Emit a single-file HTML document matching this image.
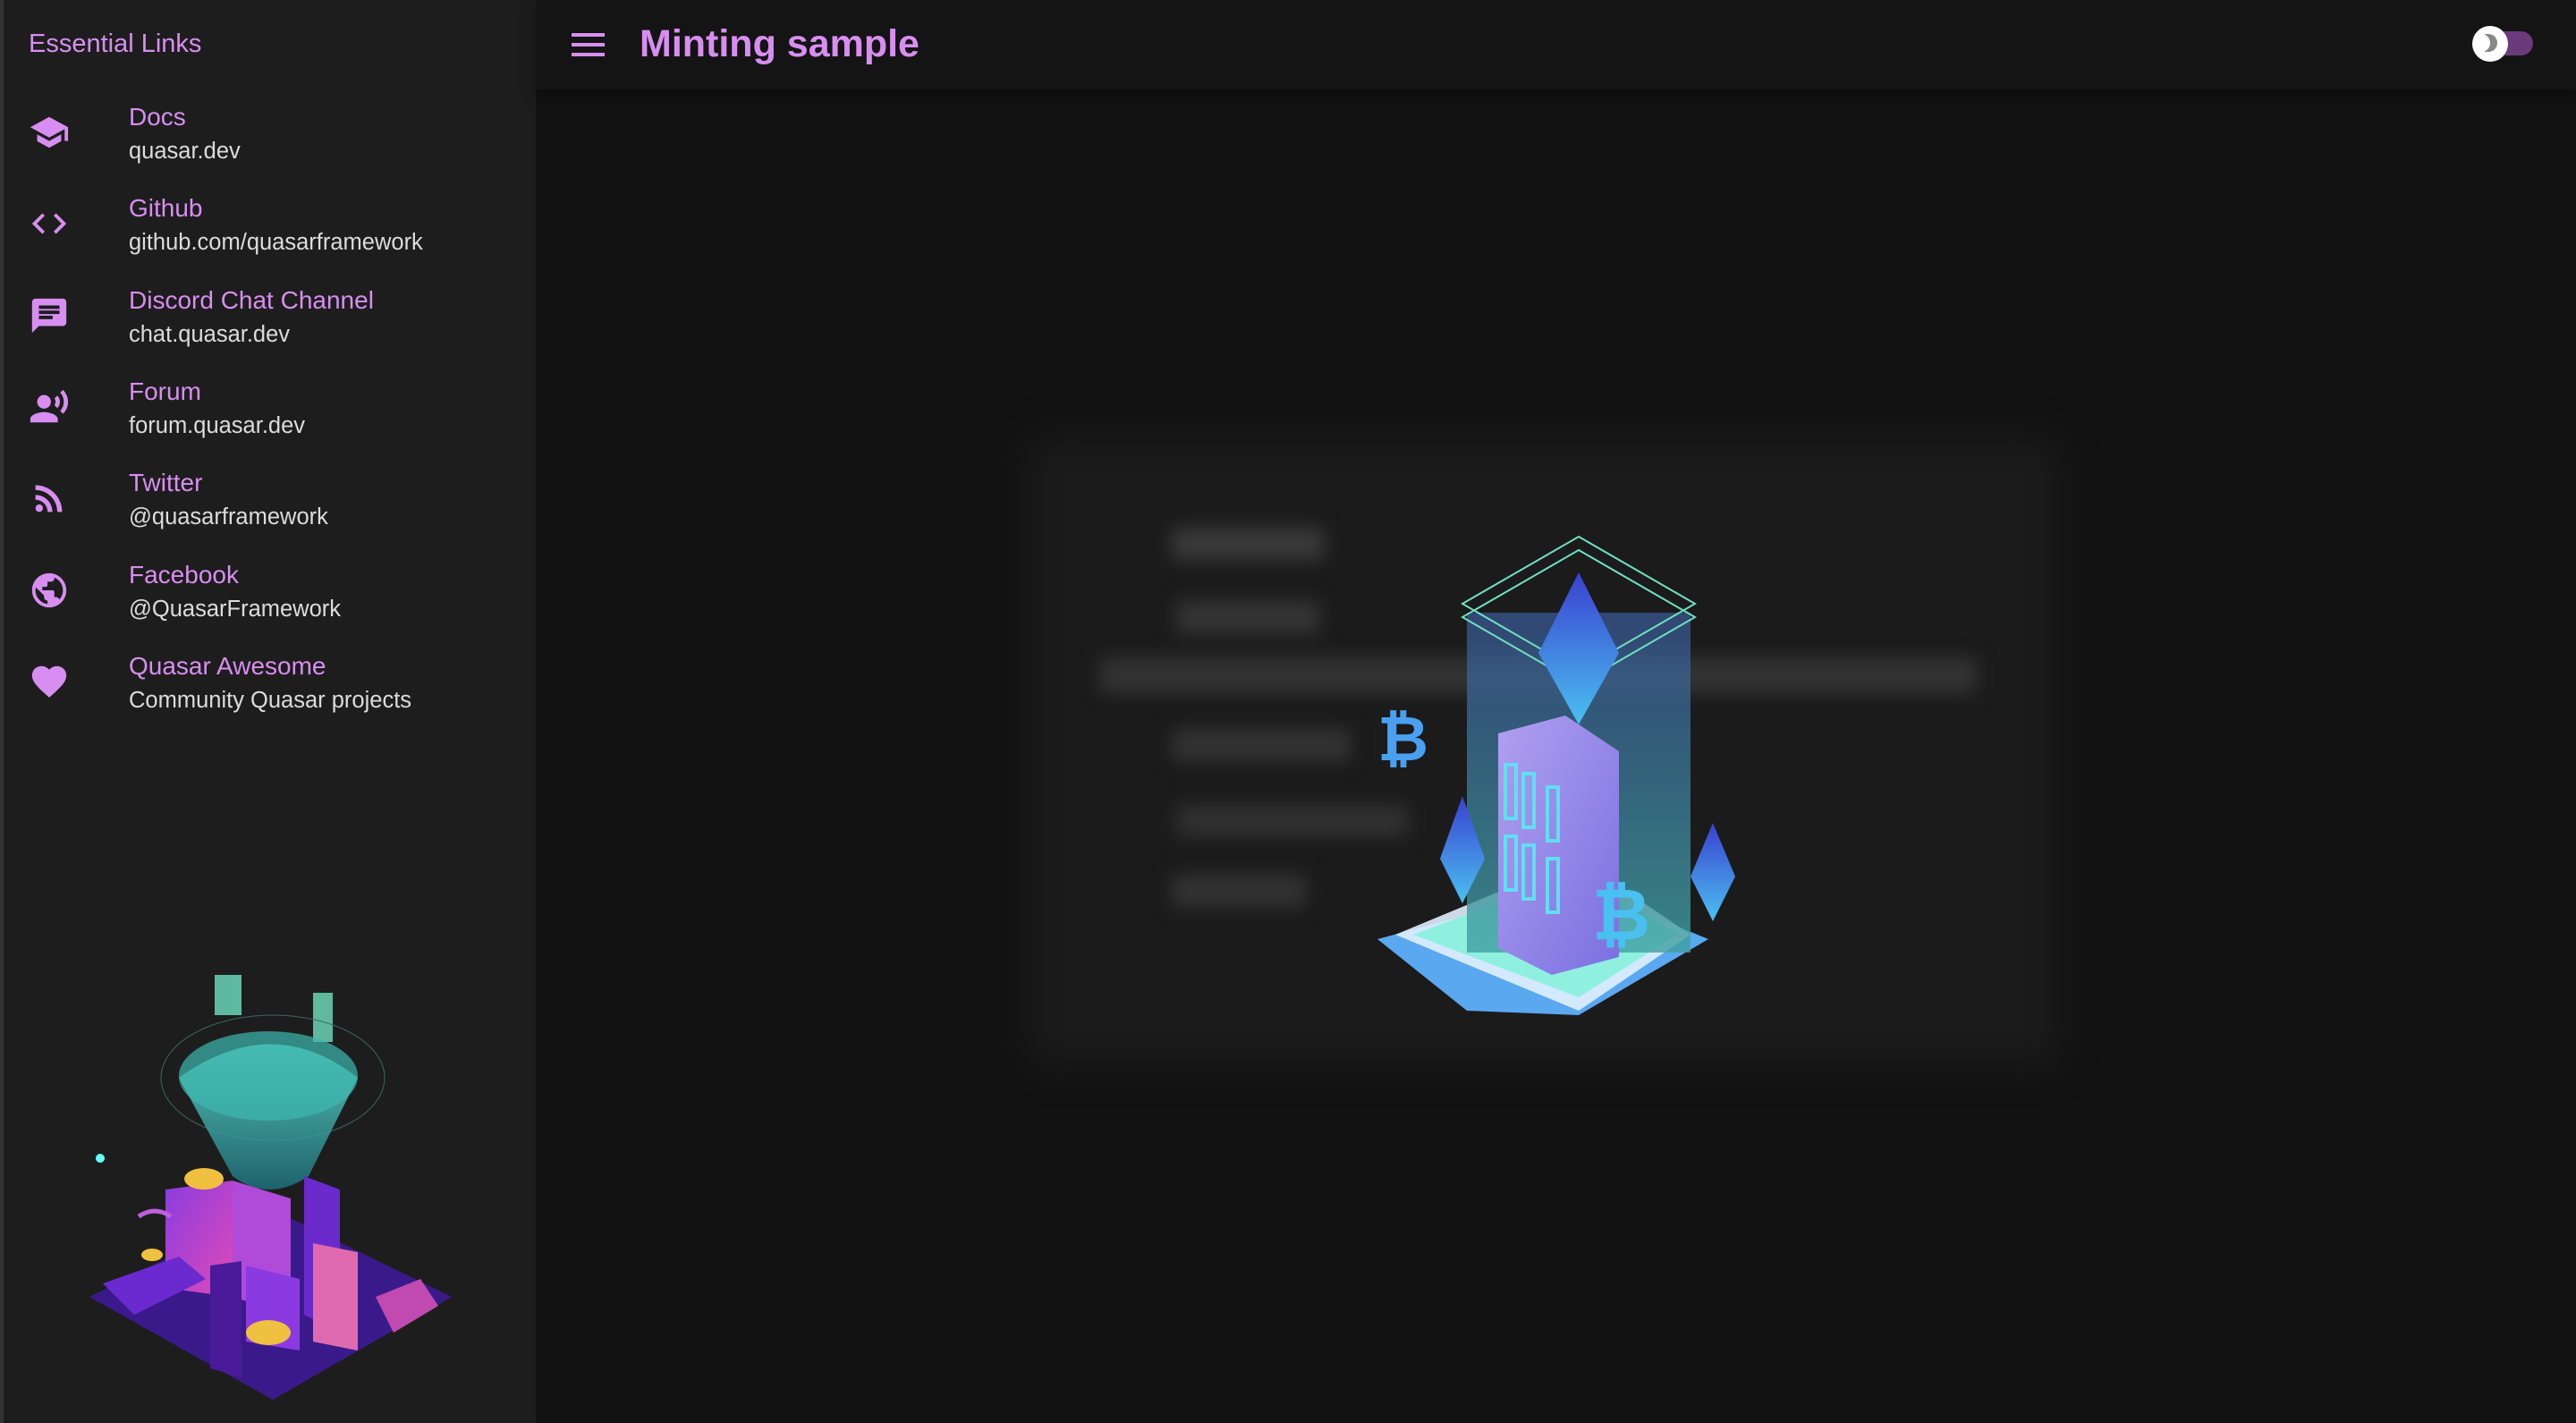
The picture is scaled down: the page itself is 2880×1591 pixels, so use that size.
<!DOCTYPE html>
<html><head><meta charset="utf-8"><style>
*{margin:0;padding:0;box-sizing:border-box}
body{width:2880px;height:1591px;background:#121212;font-family:"Liberation Sans",sans-serif;overflow:hidden;position:relative}
.side{position:absolute;left:0;top:0;width:599px;height:1591px;background:#1d1d1d;border-left:4px solid #333}
.hdr{position:absolute;left:599px;top:0;right:0;height:100px;background:#141414;box-shadow:0 6px 16px rgba(0,0,0,.35)}
.t{position:absolute;white-space:nowrap}
.lab{color:#d88ef0;font-size:28px;left:144px}
.cap{color:#dcdcdc;font-size:25.5px;left:144px}
.ic{position:absolute;left:32px;width:46px;height:46px}
</style></head><body>
<div class="side">
<div class="t" style="left:28px;top:33px;color:#d88ef0;font-size:29px">Essential Links</div>
</div>
<div class="hdr"></div>
<div style="position:absolute;left:639px;top:37px;width:37px;height:4px;background:#d88ef0;box-shadow:0 11px 0 #d88ef0,0 22px 0 #d88ef0"></div>
<div class="t" style="left:715px;top:25px;color:#d88ef0;font-size:43px;font-weight:bold">Minting sample</div>
<div style="position:absolute;left:2770px;top:35px;width:62px;height:27px;border-radius:14px;background:#6a3a7c"></div>
<div style="position:absolute;left:2764px;top:29px;width:40px;height:40px;border-radius:50%;background:#fff"></div>
<div style="position:absolute;left:2778px;top:38px;width:14px;height:20px;border-radius:0 10px 10px 0;background:#888"></div>
<div style="position:absolute;left:2772px;top:38px;width:12px;height:20px;border-radius:0 10px 10px 0;background:#fff"></div>

<div class="t lab" style="top:115px">Docs</div><div class="t cap" style="top:155px">quasar.dev</div>
<div class="t lab" style="top:217px">Github</div><div class="t cap" style="top:257px">github.com/quasarframework</div>
<div class="t lab" style="top:320px">Discord Chat Channel</div><div class="t cap" style="top:360px">chat.quasar.dev</div>
<div class="t lab" style="top:422px">Forum</div><div class="t cap" style="top:462px">forum.quasar.dev</div>
<div class="t lab" style="top:524px">Twitter</div><div class="t cap" style="top:564px">@quasarframework</div>
<div class="t lab" style="top:627px">Facebook</div><div class="t cap" style="top:667px">@QuasarFramework</div>
<div class="t lab" style="top:729px">Quasar Awesome</div><div class="t cap" style="top:769px">Community Quasar projects</div>

<svg class="ic" style="top:125px" viewBox="0 0 24 24" fill="#d88ef0"><path d="M5 13.18v4L12 21l7-3.82v-4L12 17l-7-3.82zM12 3L1 9l11 6 9-4.91V17h2V9L12 3z"/></svg>
<svg class="ic" style="top:227px" viewBox="0 0 24 24" fill="#d88ef0"><path d="M9.4 16.6L4.8 12l4.6-4.6L8 6l-6 6 6 6 1.4-1.4zm5.2 0l4.6-4.6-4.6-4.6L16 6l6 6-6 6-1.4-1.4z"/></svg>
<svg class="ic" style="top:330px" viewBox="0 0 24 24" fill="#d88ef0"><path d="M20 2H4c-1.1 0-2 .9-2 2v18l4-4h14c1.1 0 2-.9 2-2V4c0-1.1-.9-2-2-2zM6 9h12v2H6V9zm8 5H6v-2h8v2zm4-6H6V6h12v2z"/></svg>
<svg class="ic" style="top:432px" viewBox="0 0 24 24" fill="#d88ef0"><circle cx="9" cy="9" r="4"/><path d="M9 15c-2.67 0-8 1.34-8 4v2h16v-2c0-2.66-5.330-4-8-4zm7.76-9.64l-1.68 1.690c.84 1.18.84 2.71 0 3.89l1.68 1.69c2.02-2.02 2.020-5.07 0-7.27zM20.07 2l-1.63 1.63c2.77 3.02 2.77 7.56 0 10.74L20.07 16c3.9-3.890 3.91-9.95 0-14z"/></svg>
<svg class="ic" style="top:534px" viewBox="0 0 24 24" fill="#d88ef0"><circle cx="6.18" cy="17.82" r="2.18"/><path d="M4 4.44v2.83c7.03 0 12.73 5.7 12.73 12.73h2.83c0-8.59-6.97-15.56-15.56-15.56zm0 5.66v2.83c3.9 0 7.07 3.17 7.07 7.07h2.83c0-5.47-4.43-9.9-9.9-9.9z"/></svg>
<svg class="ic" style="top:637px" viewBox="0 0 24 24" fill="#d88ef0"><path d="M12 2C6.48 2 2 6.48 2 12s4.48 10 10 10 10-4.48 10-10S17.52 2 12 2zm-1 17.93c-3.95-.49-7-3.85-7-7.93 0-.62.08-1.21.21-1.79L9 15v1c0 1.1.9 2 2 2v1.930zm6.9-2.54c-.26-.81-1-1.39-1.9-1.39h-1v-3c0-.55-.45-1-1-1H8v-2h2c.55 0 1-.45 1-1V7h2c1.1 0 2-.9 2-2v-.41c2.93 1.19 5 4.06 5 7.41 0 2.08-.8 3.97-2.1 5.39z"/></svg>
<svg class="ic" style="top:739px" viewBox="0 0 24 24" fill="#d88ef0"><path d="M12 21.35l-1.45-1.32C5.4 15.36 2 12.28 2 8.5 2 5.42 4.42 3 7.5 3c1.74 0 3.41.81 4.5 2.09C13.09 3.81 14.76 3 16.5 3 19.58 3 22 5.42 22 8.5c0 3.78-3.4 6.86-8.55 11.54L12 21.35z"/></svg>

<svg style="position:absolute;left:60px;top:1070px" width="480" height="520" viewBox="0 0 480 520">
<defs>
<linearGradient id="fn" x1="0" y1="0" x2="0" y2="1"><stop offset="0" stop-color="#5fe0d0"/><stop offset="1" stop-color="#1e6f7a"/></linearGradient>
<linearGradient id="bd" x1="0" y1="0" x2="1" y2="1"><stop offset="0" stop-color="#8a3ce0"/><stop offset="1" stop-color="#e04ab8"/></linearGradient>
</defs>
<g fill="#6fe0c0" opacity=".8"><rect x="180" y="20" width="30" height="45"/><rect x="290" y="40" width="22" height="55"/></g>
<ellipse cx="245" cy="135" rx="125" ry="70" fill="none" stroke="#3a6a60" stroke-width="1"/>
<path d="M140 135 Q245 60 340 135 L285 245 Q240 275 200 245 Z" fill="url(#fn)" opacity=".85"/>
<ellipse cx="240" cy="133" rx="100" ry="50" fill="#3db8b0" opacity=".7"/>
<path d="M40 380 L240 280 L445 380 L245 495 Z" fill="#3a1a8a"/>
<path d="M125 260 L200 250 L200 380 L125 370 Z" fill="url(#bd)"/>
<path d="M200 250 L265 270 L265 400 L200 380 Z" fill="#b04ad8"/>
<path d="M280 245 L320 260 L320 420 L280 400 Z" fill="#6a2acc"/>
<path d="M290 320 L340 330 L340 440 L290 430 Z" fill="#e06ab0"/>
<path d="M175 345 L210 340 L210 470 L175 460 Z" fill="#4a1a9a"/>
<path d="M215 345 L275 360 L275 440 L215 430 Z" fill="#8a3ae0"/>
<path d="M55 365 L140 335 L170 360 L90 400 Z" fill="#6a2ad0"/>
<path d="M360 380 L410 360 L430 390 L380 420 Z" fill="#c04ab0"/>
<ellipse cx="168" cy="248" rx="22" ry="12" fill="#f0c040"/>
<ellipse cx="240" cy="420" rx="25" ry="14" fill="#f0c040"/>
<ellipse cx="110" cy="333" rx="12" ry="7" fill="#f0c040"/>
<path d="M95 290 q18 -12 36 0" stroke="#c060e0" stroke-width="5" fill="none"/>
<circle cx="52" cy="225" r="5" fill="#6ff"/>
</svg>

<div style="position:absolute;left:1150px;top:490px;width:1150px;height:700px;background:#1b1b1b;filter:blur(20px);border-radius:10px"></div>
<div style="filter:blur(10px)">
<div style="position:absolute;left:1310px;top:590px;width:170px;height:36px;background:#3a3a3a"></div>
<div style="position:absolute;left:1315px;top:672px;width:160px;height:36px;background:#353535"></div>
<div style="position:absolute;left:1230px;top:735px;width:980px;height:40px;background:#333"></div>
<div style="position:absolute;left:1310px;top:815px;width:200px;height:36px;background:#333"></div>
<div style="position:absolute;left:1315px;top:900px;width:260px;height:36px;background:#303030"></div>
<div style="position:absolute;left:1310px;top:978px;width:150px;height:36px;background:#333"></div>
</div>

<svg style="position:absolute;left:1520px;top:590px" width="440" height="560" viewBox="0 0 440 560">
<defs>
<linearGradient id="col" x1="0" y1="0" x2="0" y2="1"><stop offset="0" stop-color="#3a5a9a" stop-opacity=".7"/><stop offset="1" stop-color="#3fa0a0" stop-opacity=".8"/></linearGradient>
<linearGradient id="eth" x1="0" y1="0" x2="0" y2="1"><stop offset="0" stop-color="#3a40d0"/><stop offset="1" stop-color="#4ac0f0"/></linearGradient>
<linearGradient id="srv" x1="0" y1="0" x2="1" y2="1"><stop offset="0" stop-color="#b0a0f0"/><stop offset="1" stop-color="#7a70e0"/></linearGradient>
</defs>
<path d="M120 540 L20 460 L245 400 L390 460 L245 545 Z" fill="#5aa8f0"/>
<path d="M245 540 L40 455 L245 370 L370 455 Z" fill="#e0f0ff" opacity=".9"/>
<path d="M245 525 L60 455 L245 385 L355 455 Z" fill="#8ff0e0"/>
<rect x="120" y="95" width="250" height="380" fill="url(#col)"/>
<path d="M245 10 L375 85 L245 160 L115 85 Z" fill="none" stroke="#6fe0c0" stroke-width="2"/>
<path d="M245 25 L375 100 L245 175 L115 100 Z" fill="none" stroke="#6fe0c0" stroke-width="2"/>
<path d="M245 50 L290 140 L245 220 L200 140 Z" fill="url(#eth)"/>
<path d="M155 230 L230 210 L290 250 L290 480 L215 500 L155 470 Z" fill="url(#srv)"/>
<g fill="none" stroke="#5fe0f0" stroke-width="4"><rect x="163" y="265" width="12" height="60"/><rect x="183" y="275" width="12" height="60"/><rect x="210" y="290" width="12" height="60"/><rect x="163" y="345" width="12" height="60"/><rect x="183" y="355" width="12" height="60"/><rect x="210" y="370" width="12" height="60"/></g>
<text x="260" y="460" font-family="Liberation Sans" font-size="80" font-weight="bold" fill="#4ac0f0">₿</text>
<text x="20" y="260" font-family="Liberation Sans" font-size="70" font-weight="bold" fill="#4aa0f0">₿</text>
<path d="M115 300 L140 370 L115 420 L90 370 Z" fill="url(#eth)"/>
<path d="M395 330 L420 390 L395 440 L370 390 Z" fill="url(#eth)"/>
</svg>
</body></html>
